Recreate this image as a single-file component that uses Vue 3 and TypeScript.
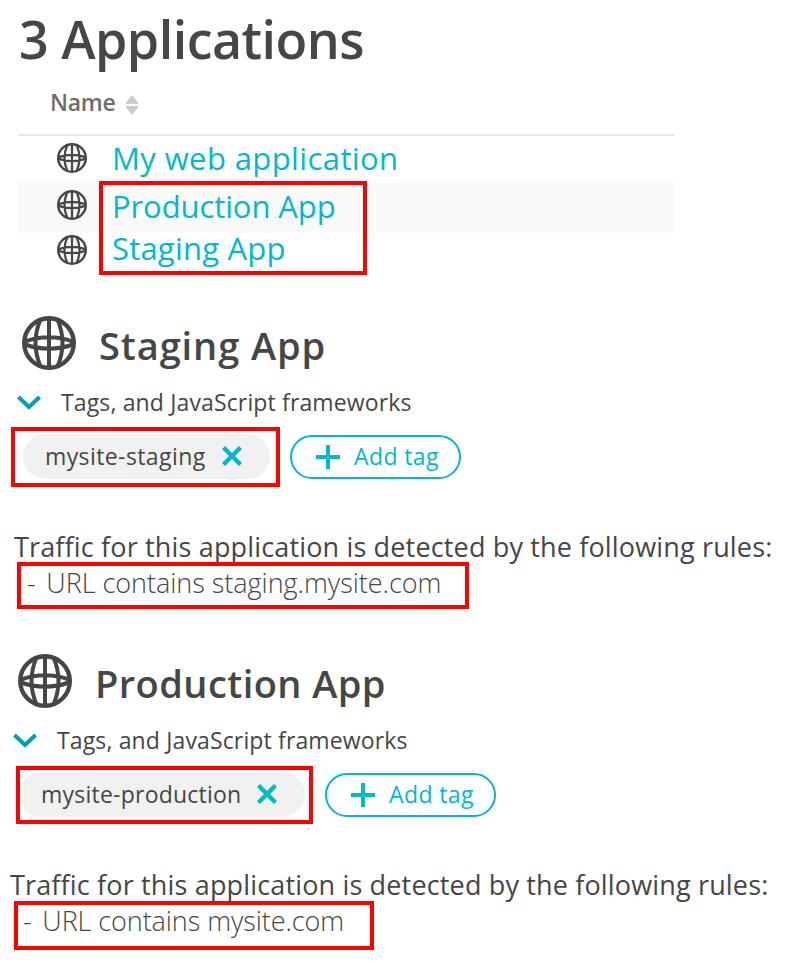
<script setup lang="ts">
import { defineComponent, h } from 'vue'

interface Application {
  id: string
  name: string
  tag: string
  rule: string
}

const rows: { id: string; name: string }[] = [
  { id: 'web', name: 'My web application' },
  { id: 'production', name: 'Production App' },
  { id: 'staging', name: 'Staging App' },
]

const applications: Application[] = [
  { id: 'staging', name: 'Staging App', tag: 'mysite-staging', rule: 'URL contains staging.mysite.com' },
  { id: 'production', name: 'Production App', tag: 'mysite-production', rule: 'URL contains mysite.com' },
]

const GlobeIcon = defineComponent({
  setup() {
    return () =>
      h('svg', { viewBox: '0 0 54 54', fill: 'none', stroke: '#454646', 'stroke-width': 4.4 }, [
        h('circle', { cx: 27, cy: 27, r: 24.8 }),
        h('path', {
          'stroke-width': 4,
          d: 'M27 2V52M18.5 3.5Q8.5 27 18.5 50.5M35.5 3.5Q45.5 27 35.5 50.5M3 25.5Q27 17 51 25.5M3 28.5Q27 37 51 28.5',
        }),
      ])
  },
})
</script>

<template>
  <main class="page">
    <h1 class="title"><span>3 Applications</span></h1>

    <section class="table">
      <header class="table-head">
        <span class="column">Name</span>
        <svg class="sort" viewBox="0 0 12 20" fill="#cccccc">
          <path d="M6 0L12 7.5V9H0V7.5ZM0 11H12V12.5L6 20L0 12.5Z" />
        </svg>
      </header>
      <div v-for="row in rows" :key="row.id" class="row" :class="row.id">
        <GlobeIcon class="row-icon" />
        <a class="link">{{ row.name }}</a>
      </div>
      <div class="mark mark-list"></div>
    </section>

    <section v-for="app in applications" :key="app.id" class="app" :class="'app-' + app.id">
      <header class="app-head">
        <GlobeIcon class="app-icon" />
        <h2 class="app-name">{{ app.name }}</h2>
      </header>
      <div class="expander">
        <svg class="chevron" viewBox="0 0 24 15" fill="none" stroke="#00a1b2" stroke-width="4">
          <path d="M1.4 2L12 12L22.6 2" />
        </svg>
        <span class="expander-label">Tags, and JavaScript frameworks</span>
      </div>
      <div class="tags">
        <div class="tag">
          <span class="tag-label">{{ app.tag }}</span>
          <svg class="remove" viewBox="0 0 20 20" stroke="#00b9cc" stroke-width="4.4">
            <path d="M1.5 1.5L18.5 18.5M18.5 1.5L1.5 18.5" />
          </svg>
        </div>
        <button class="add" type="button">
          <svg class="plus" viewBox="0 0 24 24" stroke="#00b9cc" stroke-width="4">
            <path d="M12 0V24M0 12H24" />
          </svg>
          <span class="add-label">Add tag</span>
        </button>
        <div class="mark mark-tag"></div>
      </div>
      <p class="traffic"><span>Traffic for this application is detected by the following rules:</span></p>
      <p class="rule"><span class="dash">- </span><span class="rule-text">{{ app.rule }}</span><span class="mark mark-rule"></span></p>
    </section>
  </main>
</template>

<style>
body {
  background: #ffffff;
}
</style>

<style scoped>
.page {
  box-sizing: border-box;
  width: 802px;
  height: 976px;
  overflow: hidden;
  font-family: "Open Sans", "Noto Sans", sans-serif;
  color: #454646;
  white-space: nowrap;
}
h1, h2, p {
  margin: 0;
}
svg {
  display: block;
  flex: none;
}
.title {
  padding-left: 19px;
  height: 76px;
  line-height: 78px;
  font-size: 52px;
  font-weight: 600;
  letter-spacing: -0.53px;
}
.table {
  position: relative;
  width: 656px;
  margin-left: 18px;
  height: 240px;
}
.table-head {
  box-sizing: border-box;
  display: flex;
  height: 60px;
  padding-left: 32px;
  border-bottom: 2px solid #e5e5e5;
}
.column {
  line-height: 53px;
  font-size: 23px;
  font-weight: 600;
  letter-spacing: -0.3px;
  color: #6d6d6d;
}
.sort {
  width: 12px;
  height: 20px;
  margin: 19px 0 0 10.4px;
}
.row {
  display: flex;
  align-items: flex-start;
  padding-left: 39px;
  height: 44px;
}
.row-icon {
  width: 30px;
  height: 30px;
  margin-top: 7px;
}
.link {
  margin-left: 25px;
  line-height: 45px;
  font-size: 31px;
  letter-spacing: 0.4px;
  color: #00b9cc;
}
.production {
  height: 53px;
  background: #fafafa;
}
.production .row-icon {
  margin-top: 10px;
}
.production .link {
  line-height: 53px;
  letter-spacing: -0.1px;
}
.staging .row-icon {
  margin-top: 2px;
}
.staging .link {
  line-height: 31px;
  letter-spacing: 0.2px;
}
.mark {
  position: absolute;
  box-sizing: border-box;
  border: 4px solid #ff0000;
}
.mark-list {
  left: 81px;
  top: 105px;
  width: 268px;
  height: 94px;
}
.app {
  height: 338px;
  padding-left: 14px;
}
.app-production {
  padding-left: 10px;
}
.app-head {
  display: flex;
  height: 64px;
  padding-left: 8px;
}
.app-icon {
  width: 54px;
  height: 54px;
}
.app-name {
  margin-left: 23px;
  line-height: 59px;
  font-size: 38px;
  font-weight: 600;
  letter-spacing: 0.9px;
}
.app-production .app-name {
  letter-spacing: 0.43px;
}
.expander {
  display: flex;
  height: 47px;
  padding-left: 3px;
}
.chevron {
  width: 24px;
  height: 15px;
  margin-top: 15px;
}
.expander-label {
  margin-left: 20px;
  line-height: 44px;
  font-size: 23px;
  letter-spacing: 0.14px;
}
.tags {
  position: relative;
  display: flex;
  height: 60px;
  padding-left: 9px;
}
.tag {
  box-sizing: border-box;
  display: flex;
  justify-content: space-between;
  width: 247px;
  height: 45px;
  margin-top: 7px;
  padding: 0 28px 0 22px;
  border-radius: 23px;
  background: #f1f1f1;
}
.app-production .tag {
  width: 286px;
}
.tag-label {
  line-height: 44px;
  font-size: 23px;
  letter-spacing: 0.4px;
}
.app-production .tag-label {
  letter-spacing: 0.23px;
}
.remove {
  width: 20px;
  height: 20px;
  margin-top: 12px;
}
.add {
  box-sizing: border-box;
  display: flex;
  width: 171px;
  height: 44px;
  margin: 8px 0 0 20px;
  padding: 0 0 0 24px;
  border: 2px solid #00b9cc;
  border-radius: 22px;
  background: #ffffff;
  color: #00b9cc;
  font-family: inherit;
}
.plus {
  width: 24px;
  height: 24px;
  margin-top: 8px;
}
.add-label {
  margin-left: 14px;
  line-height: 38px;
  font-size: 23px;
  letter-spacing: 0.4px;
}
.mark-tag {
  left: -3px;
  top: 0;
  width: 269px;
  height: 60px;
}
.app-production .mark-tag {
  left: 6px;
  top: 1px;
  width: 297px;
  height: 58px;
}
.traffic {
  height: 74px;
  padding-top: 40px;
  box-sizing: border-box;
  line-height: 39px;
  font-size: 27px;
  letter-spacing: 0.155px;
}
.rule {
  position: relative;
  padding-left: 13px;
  line-height: 43px;
  font-size: 27px;
  font-weight: 300;
}
.dash {
  margin-right: 3.6px;
}
.rule-text {
  letter-spacing: -0.03px;
}
.app-production .rule-text {
  letter-spacing: -0.08px;
}
.mark-rule {
  left: 3px;
  top: 1px;
  width: 452px;
  height: 47px;
}
.app-production .mark-rule {
  left: 4px;
  top: 2px;
  width: 360px;
  height: 49px;
}
</style>
